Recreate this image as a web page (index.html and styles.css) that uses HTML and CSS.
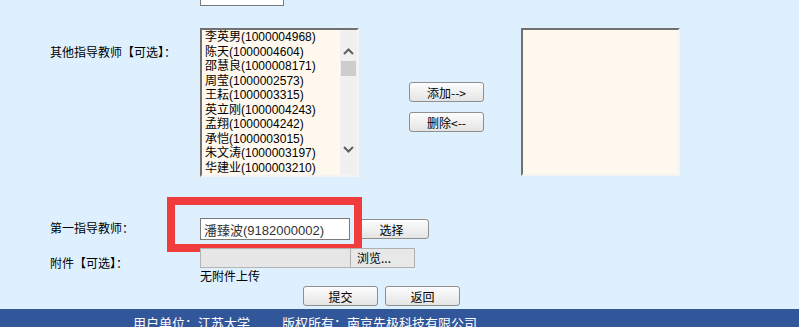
FILE: index.html
```html
<!DOCTYPE html>
<html lang="zh-CN">
<head>
  <meta charset="UTF-8" />
  <title>论文指导教师</title>
  <link rel="stylesheet" href="styles.css">
</head>
<body>
  <div class="form">
    <div class="row row-top">
      <div class="label"></div>
      <div class="field"><input type="text" class="text short" /></div>
    </div>

    <div class="row row-teachers">
      <div class="label label-top">其他指导教师【可选】：</div>
      <div class="field pick">
        <div class="listbox">
          <ul class="items">
            <li>李英男(1000004968)</li>
            <li>陈天(1000004604)</li>
            <li>邵慧良(1000008171)</li>
            <li>周莹(1000002573)</li>
            <li>王耘(1000003315)</li>
            <li>英立刚(1000004243)</li>
            <li>孟翔(1000004242)</li>
            <li>承恺(1000003015)</li>
            <li>朱文涛(1000003197)</li>
            <li>华建业(1000003210)</li>
          </ul>
          <div class="scrollbar">
            <svg class="arrow arrow-up" width="11" height="7" viewBox="0 0 11 7"><polyline points="1,6 5.5,1.5 10,6" fill="none" stroke="#606060" stroke-width="2"/></svg>
            <div class="thumb"></div>
            <svg class="arrow arrow-down" width="11" height="7" viewBox="0 0 11 7"><polyline points="1,1 5.5,5.5 10,1" fill="none" stroke="#606060" stroke-width="2"/></svg>
          </div>
        </div>
        <div class="move">
          <button class="btn">添加--&gt;</button>
          <button class="btn">删除&lt;--</button>
        </div>
        <div class="listbox chosen"></div>
      </div>
    </div>

    <div class="row row-first">
      <div class="label">第一指导教师：</div>
      <div class="field inline">
        <input type="text" class="text teacher" value="潘臻波(9182000002)" />
        <button class="btn">选择</button>
        <div class="mark"></div>
      </div>
    </div>

    <div class="row row-file">
      <div class="label label-file">附件【可选】：</div>
      <div class="field">
        <div class="inline">
          <div class="file-box"></div>
          <div class="browse">浏览...</div>
        </div>
        <div class="note">无附件上传</div>
      </div>
    </div>

    <div class="actions">
      <button class="btn">提交</button>
      <button class="btn">返回</button>
    </div>
  </div>

  <div class="footer">
    <span>用户单位：江苏大学</span>
    <span>版权所有：南京先极科技有限公司</span>
  </div>
</body>
</html>
```

FILE: styles.css
```css
* {
  box-sizing: border-box;
}

body {
  margin: 0;
  height: 327px;
  overflow: hidden;
  background: #def0fe;
  font-family: "Liberation Sans", "Noto Sans CJK SC", sans-serif;
  font-size: 12px;
  color: #000;
}

.form {
  padding-left: 50px;
}

.row {
  display: flex;
}

.label {
  width: 150px;
  flex: none;
  line-height: 22px;
}

.field {
  position: relative;
}

.inline {
  display: flex;
  align-items: center;
}

.text {
  border: 1px solid #7b7b7b;
  background: #fff;
  outline: none;
  font-family: inherit;
  margin: 0;
}

/* top row is cut off by the window */
.row-top {
  margin-top: -16px;
}

.short {
  width: 84px;
  height: 22px;
}

.row-teachers {
  margin-top: 22px;
}

.label-top {
  padding-top: 18px;
  line-height: 14px;
}

.pick {
  display: flex;
  align-items: flex-start;
}

.listbox {
  width: 159px;
  height: 149px;
  display: flex;
  background: #fef8ee;
  border: 2px solid;
  border-color: #707070 #f4f4f4 #f4f4f4 #707070;
  overflow: hidden;
}

.items {
  list-style: none;
  margin: 0;
  padding: 0 0 0 3px;
  flex: 1;
  line-height: 14.5px;
  white-space: nowrap;
  overflow: hidden;
}

.scrollbar {
  width: 17px;
  flex: none;
  background: #f0f0f0;
  display: flex;
  flex-direction: column;
  align-items: center;
}

.arrow {
  display: block;
}

.arrow-up {
  margin-top: 18px;
}

.thumb {
  width: 15px;
  height: 15px;
  margin-top: 6px;
  background: #cdcdcd;
}

.arrow-down {
  margin-top: 70px;
}

.move {
  display: flex;
  flex-direction: column;
  gap: 10px;
  padding-top: 54px;
  margin-left: 50px;
}

.chosen {
  margin-left: 37px;
  height: 148px;
}

.btn {
  width: 75px;
  height: 20px;
  padding: 0;
  margin: 0;
  border: 1px solid #8f8f8f;
  border-radius: 3px;
  background: linear-gradient(#fdfdfd, #e4e4e4);
  font-family: "Noto Sans CJK SC", sans-serif;
  font-size: 12px;
  line-height: 17px;
  color: #000;
}

.row-first {
  margin-top: 41px;
}

.teacher {
  width: 150px;
  height: 22px;
  padding: 0 0 0 3px;
  font-size: 13px;
  color: #333;
}

.row-first .btn {
  margin-left: 4px;
}

.mark {
  position: absolute;
  left: -33px;
  top: -21px;
  width: 195px;
  height: 55px;
  border: 8px solid #f03c3c;
}

.row-file {
  margin-top: 8px;
}

.label-file {
  line-height: 20px;
  padding-top: 6px;
}

.file-box {
  width: 150px;
  height: 20px;
  background: #e6e6e6;
  border: 1px solid #b4b4b4;
  border-right: none;
}

.browse {
  width: 65px;
  height: 20px;
  background: #e8e8e8;
  border: 1px solid #b0b0b0;
  line-height: 18px;
  padding-left: 6px;
  font-family: "Noto Sans CJK SC", sans-serif;
}

.note {
  line-height: 16px;
  font-family: "Noto Sans CJK SC", sans-serif;
}

.actions {
  display: flex;
  gap: 7px;
  margin-top: 2px;
  padding-left: 253px;
}

.footer {
  margin-top: 3px;
  height: 30px;
  background: #32569a;
  color: #fff;
  font-family: "Noto Sans CJK SC", sans-serif;
  font-size: 13px;
  line-height: 16px;
  padding: 6px 0 0 133px;
  display: flex;
  gap: 32px;
}
```
